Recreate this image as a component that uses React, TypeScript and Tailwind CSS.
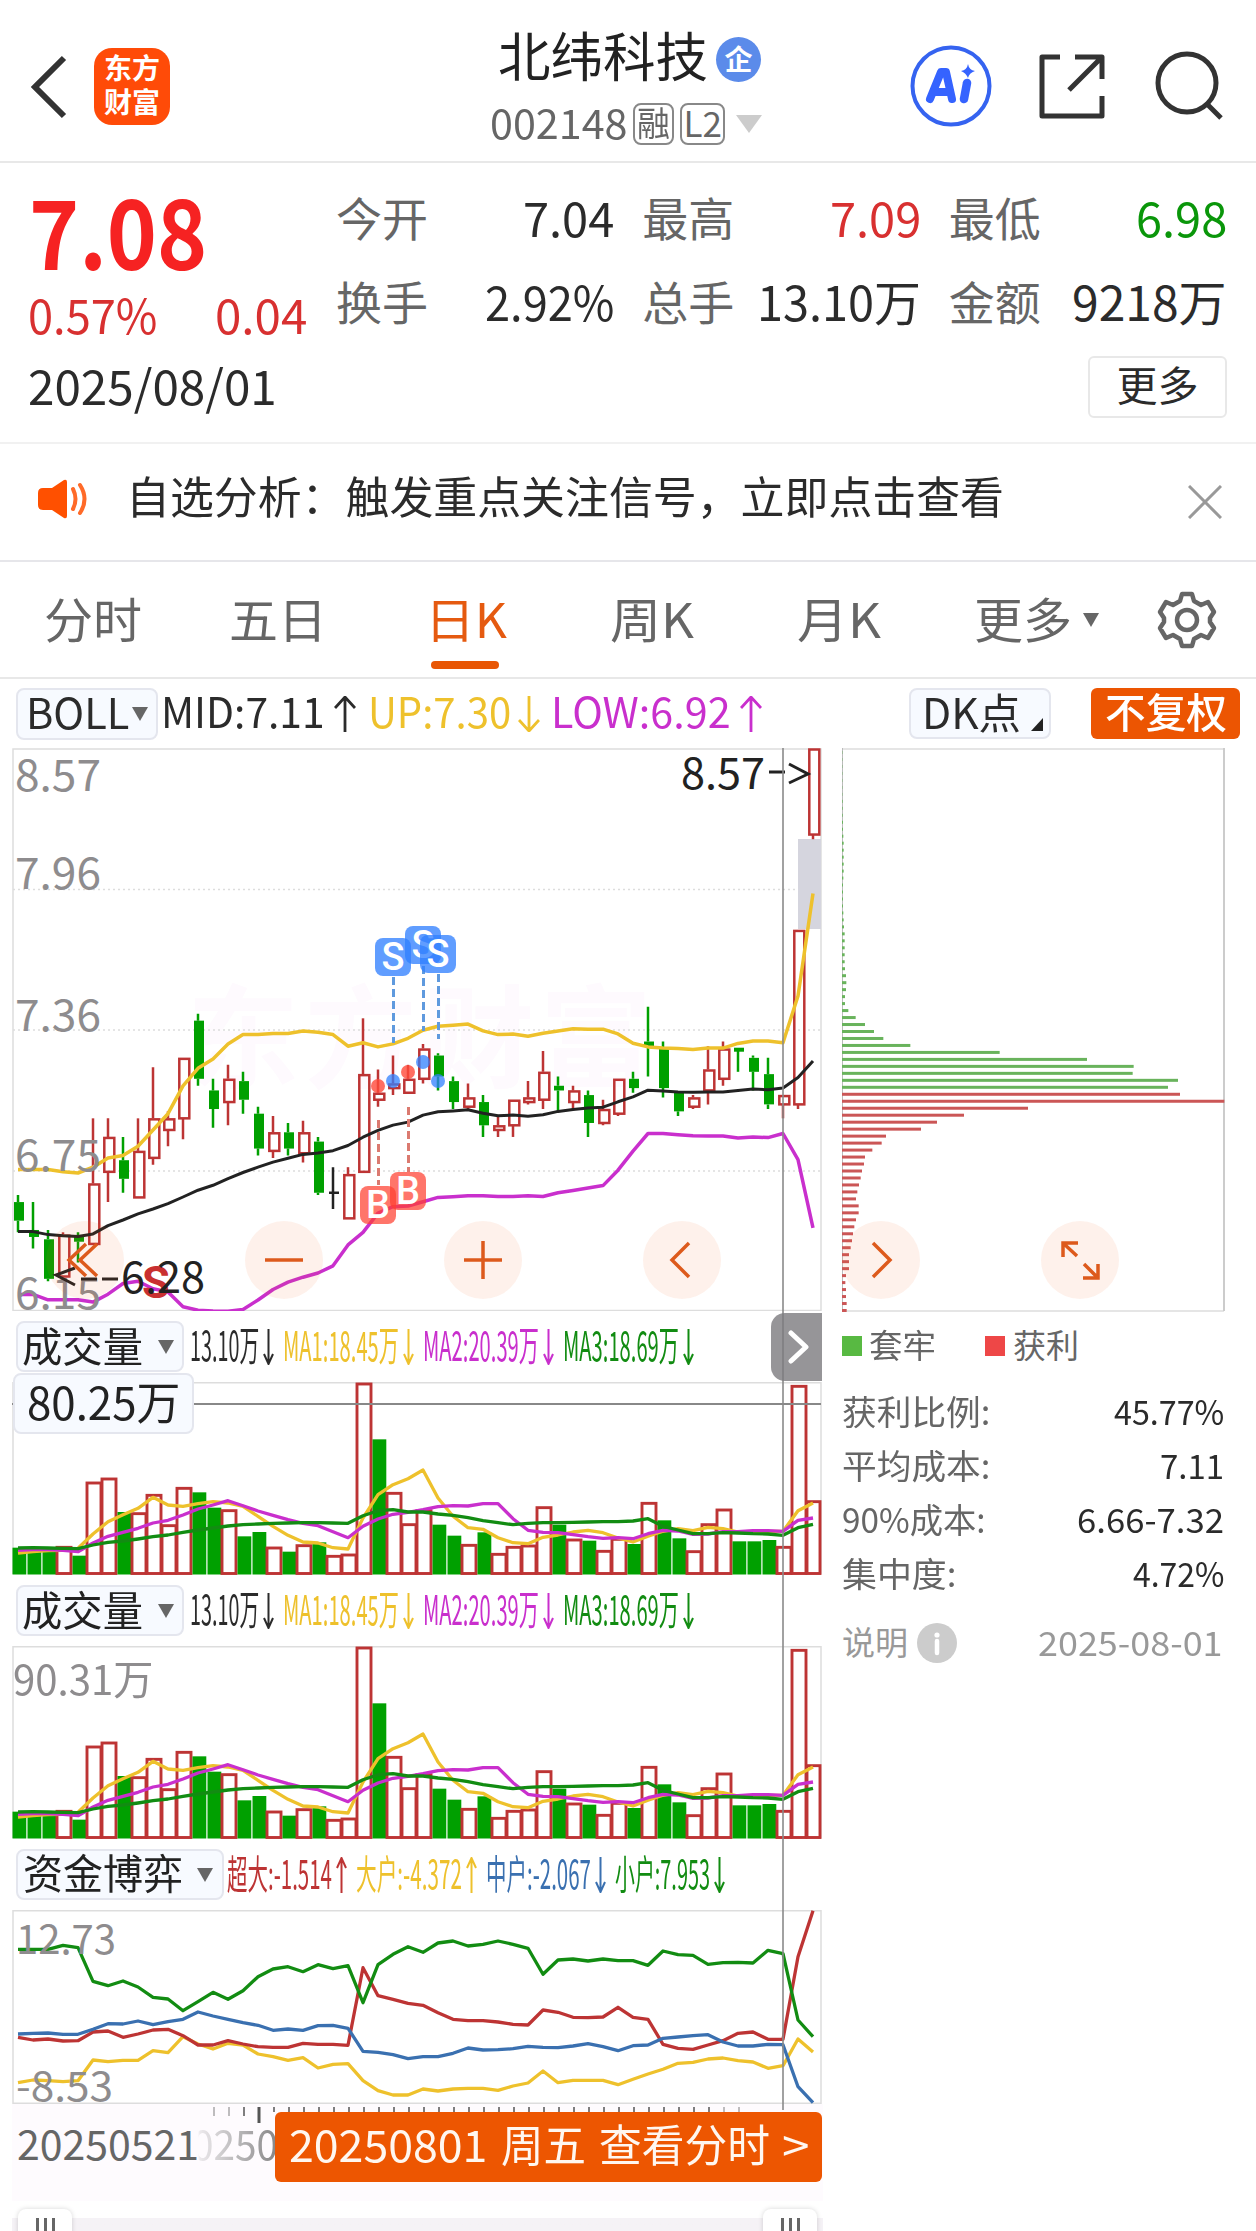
import { useLayoutEffect, useRef, useState } from 'react'
import type { ReactNode } from 'react'

const RED = '#bd3434'
const GREEN = '#00a000'
const YELLOW = '#eec12c'
const PURPLE = '#c92fcd'
const DARK_GREEN = '#128c12'
const BLUE = '#3a70b0'

// [high, body top, body bottom, low, kind], prices in cents
type Candle = [number, number, number, number, 'u' | 'd' | 'x']

const candles: Candle[] = [
  [665, 662, 654, 649, 'd'],
  [662, 650, 647, 642, 'd'],
  [650, 646, 629, 628, 'd'],
  [649, 648, 630, 630, 'u'],
  [649, 647, 645, 636, 'd'],
  [698, 670, 644, 644, 'u'],
  [698, 690, 675, 662, 'u'],
  [690, 680, 672, 666, 'd'],
  [698, 684, 664, 664, 'u'],
  [720, 698, 681, 678, 'u'],
  [701, 698, 693, 686, 'u'],
  [724, 724, 698, 689, 'u'],
  [743, 740, 715, 712, 'd'],
  [715, 710, 702, 694, 'd'],
  [721, 715, 705, 695, 'u'],
  [718, 714, 706, 700, 'd'],
  [703, 700, 685, 682, 'd'],
  [699, 692, 684, 681, 'u'],
  [696, 692, 685, 682, 'd'],
  [697, 692, 683, 679, 'u'],
  [690, 688, 666, 665, 'd'],
  [677, 666, 666, 659, 'x'],
  [677, 674, 655, 655, 'u'],
  [741, 717, 675, 675, 'u'],
  [719, 709, 706, 703, 'u'],
  [725, 713, 711, 708, 'u'],
  [721, 715, 709, 709, 'u'],
  [730, 728, 715, 713, 'u'],
  [726, 725, 716, 710, 'd'],
  [716, 714, 705, 702, 'd'],
  [713, 707, 703, 702, 'u'],
  [708, 705, 695, 690, 'd'],
  [699, 695, 693, 690, 'u'],
  [706, 706, 695, 690, 'u'],
  [714, 707, 705, 704, 'u'],
  [727, 718, 706, 702, 'u'],
  [716, 712, 710, 701, 'd'],
  [712, 710, 705, 702, 'u'],
  [710, 708, 696, 690, 'd'],
  [706, 702, 696, 695, 'u'],
  [715, 715, 700, 699, 'u'],
  [718, 715, 711, 709, 'd'],
  [746, 731, 729, 716, 'd'],
  [731, 728, 711, 707, 'd'],
  [709, 709, 701, 699, 'd'],
  [708, 707, 703, 702, 'u'],
  [729, 719, 710, 704, 'u'],
  [731, 728, 715, 712, 'u'],
  [728, 728, 727, 718, 'd'],
  [725, 724, 718, 710, 'd'],
  [724, 717, 704, 702, 'd'],
  [708, 708, 704, 698, 'u'],
  [779, 779, 704, 702, 'u'],
  [857, 857, 820, 818, 'u'],
]

const bollUp = [
  676, 676, 676, 675, 674.5, 677, 681, 682, 686, 693, 700, 712, 719.5, 723.5, 730, 734, 734, 734.5, 734.5, 735.5, 735,
  734, 729, 730.5, 728.7, 730, 732.4, 735.9, 737.6, 738, 738.5, 735.6, 734, 734.2, 733.3, 734.6, 735.5, 736.5, 736.3,
  736.3, 734.3, 730.3, 728.7, 728.2, 728, 727.6, 728.2, 728.2, 730.2, 731.2, 731.2, 730.5, 750.6, 794.7,
]
const bollMid = [
  649.3, 649.3, 648, 647.5, 647.2, 648.3, 651.9, 654.3, 656.9, 659, 661.3, 664.2, 667.1, 669.2, 672.1, 674.7, 677,
  679.2, 680.8, 682.5, 683.1, 684.1, 686.3, 689.9, 692.8, 695.1, 696.4, 699.4, 700.8, 701.2, 701.7, 700.2, 699.1,
  699.4, 698.9, 699.5, 701, 701.8, 702.4, 702.8, 705.1, 707.2, 710.1, 709.8, 709.3, 709.2, 709.3, 709.3, 710, 710.6,
  710.3, 711.1, 715.6, 722.7,
]
const bollLow = [
  622.3, 622.3, 620, 620, 620, 619, 622.4, 627, 628, 624.7, 623.4, 617, 615.5, 615.2, 615.1, 615.8, 619.9, 624.4,
  627.6, 629.7, 631.5, 634.6, 643.6, 649, 657.2, 660, 660.3, 662.1, 664, 664.3, 664.7, 664.7, 664.4, 664.4, 664.7,
  664.4, 666, 667, 668.1, 669.1, 675.7, 683.9, 691.5, 691.5, 690.9, 690.5, 690.4, 690.4, 689.6, 690, 689.7, 691.5,
  680.2, 650.9,
]

// volume series, measured down from the top of the pane in thirds of a pixel
const volumeTop = [
  714, 712, 712, 710, 738, 517, 505, 607, 609, 554, 645, 533, 548, 594, 600, 680, 667, 712, 726, 705, 698, 737, 733,
  220, 389, 548, 642, 600, 645, 678, 704, 668, 731, 710, 706, 591, 645, 688, 693, 722, 686, 703, 578, 632, 686, 723,
  642, 598, 695, 695, 691, 710, 227, 573,
]
const volumeDir = 'ddduduuduuuudduddududuuuduuudduduuuududuududduuuddduuu'
const ma1 = [
  730, 726, 723, 722, 716, 673, 636, 615, 596, 563, 586, 590, 582, 576, 580, 590, 620, 650, 677, 697, 700, 714, 718,
  625, 555, 525, 507, 481, 565, 620, 654, 659, 684, 699, 702, 683, 676, 667, 662, 669, 685, 697, 680, 665, 657, 663,
  653, 657, 667, 665, 665, 665, 603, 580,
]
const ma2 = [
  722, 720, 720, 722, 726, 700, 680, 668, 656, 640, 632, 616, 598, 586, 573, 588, 604, 617, 630, 641, 648, 666, 684,
  650, 628, 614, 608, 600, 591, 588, 589, 582, 582, 627, 662, 668, 669, 675, 681, 686, 684, 687, 672, 662, 664, 674,
  673, 666, 666, 663, 663, 665, 632, 625,
]
const ma3 = [
  715, 714, 715, 716, 717, 706, 698, 694, 688, 681, 676, 668, 661, 655, 649, 645, 643, 641, 640, 639, 639, 640, 641,
  618, 603, 600, 607, 607, 613, 617, 624, 633, 639, 645, 641, 639, 639, 638, 637, 636, 636, 634, 627, 650, 661, 672,
  672, 669, 670, 672, 673, 677, 654, 644,
]

const fundSmall = [
  328, 328, 328, 316, 323, 424, 437, 423, 441, 472, 477, 512, 485, 457, 478, 452, 410, 387, 380, 395, 374, 386, 377,
  488, 374, 343, 320, 337, 309, 303, 318, 313, 303, 313, 325, 403, 360, 357, 363, 357, 362, 362, 376, 333, 344, 346,
  373, 368, 367, 369, 331, 341, 540, 590,
]
const fundSuper = [
  592, 600, 597, 603, 602, 576, 573, 592, 582, 570, 568, 587, 615, 615, 602, 612, 620, 622, 622, 610, 613, 613, 616,
  383, 467, 478, 490, 496, 518, 538, 542, 542, 546, 553, 555, 510, 517, 532, 533, 531, 502, 532, 538, 613, 625, 628,
  615, 602, 580, 576, 598, 598, 350, 212,
]
const fundMiddle = [
  582, 580, 579, 583, 583, 568, 551, 552, 543, 554, 545, 538, 516, 528, 538, 548, 556, 571, 567, 571, 557, 556, 565,
  634, 637, 644, 656, 650, 650, 640, 624, 630, 629, 626, 619, 622, 623, 618, 611, 620, 632, 617, 615, 595, 591, 587,
  584, 606, 618, 618, 613, 614, 740, 788,
]
const fundLarge = [
  728, 720, 722, 725, 722, 660, 665, 661, 661, 632, 638, 590, 612, 627, 610, 615, 642, 650, 661, 653, 684, 673, 671,
  722, 752, 765, 765, 747, 753, 747, 745, 745, 751, 738, 729, 693, 728, 721, 721, 721, 734, 718, 702, 688, 670, 667,
  657, 654, 662, 666, 685, 677, 597, 636,
]

const chips = [
  1, 1, 1, 1, 1, 1, 1, 2, 2, 2, 3, 3, 4, 5, 5, 5, 5, 5, 4, 3, 3, 3, 3, 4, 5, 6, 8, 8, 8, 8, 8, 9, 12, 13, 12, 9, 9, 19,
  41, 69, 96, 124, 205, 473, 735, 875, 872, 1008, 978, 1014, 1147, 558, 366, 285, 237, 132, 119, 91, 69, 66, 60, 56,
  51, 46, 42, 50, 50, 42, 37, 33, 30, 26, 21, 21, 21, 12, 10, 12, 12, 14, 14,
]

const cx = (i: number) => 6 + i * 15
const priceY = (p: number) => (857 - p) * 2.326 + 0.5
const volY = (v: number) => (v - 217) / 3
const fundY = (v: number) => (v - 210) / 3
const line = (data: number[], y: (v: number) => number) =>
  data.map((v, i) => `${cx(i)},${y(v).toFixed(1)}`).join(' ')

// Squeezes or stretches one line of text to a given width
function Fit({ w, className = '', children }: { w: number; className?: string; children: ReactNode }) {
  const ref = useRef<HTMLSpanElement>(null)
  const [scale, setScale] = useState(1)
  useLayoutEffect(() => {
    if (ref.current) setScale(w / ref.current.offsetWidth)
  }, [w])
  return (
    <span className={`flex shrink-0 ${className}`} style={{ width: w }}>
      <span
        ref={ref}
        className="shrink-0 origin-left leading-none whitespace-nowrap"
        style={{ transform: `scaleX(${scale})` }}
      >
        {children}
      </span>
    </span>
  )
}

function Arrow({ down, narrow }: { down?: boolean; narrow?: boolean }) {
  const w = narrow ? 11 : 22
  const d = down
    ? `M${w / 2} 0V34M1 ${narrow ? 25 : 24}L${w / 2} 35L${w - 1} ${narrow ? 25 : 24}`
    : `M${w / 2} 36V2M1 ${narrow ? 11 : 12}L${w / 2} 1L${w - 1} ${narrow ? 11 : 12}`
  return (
    <svg width={w} height="36" viewBox={`0 0 ${w} 36`} className="shrink-0" fill="none" stroke="currentColor">
      <path d={d} strokeWidth={narrow ? 2 : 2.8} />
    </svg>
  )
}

function Caret({ className = '' }: { className?: string }) {
  return (
    <svg width="16" height="14" viewBox="0 0 16 14" className={`shrink-0 ${className}`} fill="#666">
      <path d="M0 0H16L8 14Z" />
    </svg>
  )
}

function Label({ x, y, w, size = 44, fill = '#8e8c8e', children }: {
  x: number
  y: number
  w: number
  size?: number
  fill?: string
  children: string
}) {
  return (
    <text x={x} y={y} fontSize={size} fill={fill} textLength={w} lengthAdjust="spacingAndGlyphs">
      {children}
    </text>
  )
}

function Header() {
  return (
    <header className="flex h-[163px] border-b-2 border-[#e8e8e8]">
      <div className="flex w-[490px] items-center">
        <svg width="40" height="66" viewBox="0 0 40 66" className="mt-[12px] ml-[27px]" fill="none">
          <path d="M37 4L8 33L37 62" stroke="#333" strokeWidth="6" />
        </svg>
        <div className="mt-[12px] ml-[27px] flex h-[77px] w-[76px] flex-col items-center justify-center gap-[6px] rounded-[18px] bg-[#ff4b08] pb-[5px] text-[28px] font-bold text-white">
          <Fit w={56}>东方</Fit>
          <Fit w={56}>财富</Fit>
        </div>
      </div>
      <div className="w-[290px]">
        <div className="mt-[28px] flex items-center">
          <Fit w={210} className="ml-[8px] pb-[9px] text-[53px] text-[#222]">
            北纬科技
          </Fit>
          <span className="ml-[8px] flex size-[45px] items-center justify-center rounded-full bg-[#5b8bea] pb-[3px] text-[28px] leading-none font-bold text-white">
            企
          </span>
        </div>
        <div className="mt-[12px] flex h-[44px] items-center text-[#666]">
          <Fit w={138} className="pb-[6px] text-[41px]">
            002148
          </Fit>
          <span className="ml-[5px] flex h-[42px] w-[41px] items-center justify-center rounded-[8px] border-2 border-[#888] pb-[4px] text-[34px]">
            <Fit w={33}>融</Fit>
          </span>
          <span className="ml-[6px] flex h-[42px] w-[45px] items-center justify-center rounded-[8px] border-2 border-[#888] pb-[5px] text-[35px]">
            <Fit w={38}>L2</Fit>
          </span>
          <svg width="26" height="18" viewBox="0 0 26 18" className="ml-[11px]" fill="#ccc">
            <path d="M0 0H26L13 18Z" />
          </svg>
        </div>
      </div>
      <div className="flex flex-1 pt-[45px] pl-[130px]">
        <svg width="82" height="82" viewBox="0 0 82 82" fill="none">
          <circle cx="41" cy="41" r="38.5" stroke="#3563f0" strokeWidth="4" />
          <path d="M20 54L31 27H36L42 54M25 47H40" stroke="#3563ff" strokeWidth="8" strokeLinejoin="round" strokeLinecap="round" />
          <path d="M57 38L54 54" stroke="#3563ff" strokeWidth="8.5" strokeLinecap="round" />
          <path d="M58 19Q59 25 65 26Q59 28 58 33Q56 28 51 26Q57 25 58 19Z" fill="#3563ff" />
        </svg>
        <svg width="70" height="70" viewBox="0 0 70 70" className="mt-[7px] ml-[45px]" fill="none" stroke="#333" strokeWidth="5" strokeLinejoin="round">
          <path d="M23 5H5V64H65V44" />
          <path d="M38 5H65V27M65 5L32 38" />
        </svg>
        <svg width="72" height="72" viewBox="0 0 72 72" className="mt-[5px] ml-[46px]" fill="none" stroke="#333" strokeWidth="5">
          <circle cx="34" cy="33" r="29" />
          <path d="M54 54L68 68" />
        </svg>
      </div>
    </header>
  )
}

const quotes = [
  { label: '今开', value: '7.04', w: 91, color: 'text-[#2b2b2b]' },
  { label: '最高', value: '7.09', w: 91, color: 'text-[#d83030]' },
  { label: '最低', value: '6.98', w: 91, color: 'text-[#0a960a]' },
  { label: '换手', value: '2.92%', w: 129, color: 'text-[#2b2b2b]' },
  { label: '总手', value: '13.10万', w: 164, color: 'text-[#2b2b2b]' },
  { label: '金额', value: '9218万', w: 155, color: 'text-[#2b2b2b]' },
]

function Quote() {
  return (
    <section className="h-[281px] border-b-2 border-[#f1f1f1] pr-[29px] pl-[28px]">
      <div className="flex">
        <div className="w-[308px] pt-[18px]">
          <Fit w={178} className="ml-[1px] text-[96px] font-bold text-[#f62222]">
            7.08
          </Fit>
          <div className="mt-[12px] flex justify-between pr-[29px] text-[48px] text-[#d83030]">
            <Fit w={129}>0.57%</Fit>
            <Fit w={92}>0.04</Fit>
          </div>
        </div>
        <div className="grid flex-1 grid-cols-3 content-start gap-x-[28px] gap-y-[36px] pt-[29px]">
          {quotes.map((q) => (
            <div key={q.label} className="flex h-[48px] items-center justify-between">
              <Fit w={92} className="text-[46px] text-[#666]">
                {q.label}
              </Fit>
              <Fit w={q.w} className={`text-[48px] ${q.color}`}>
                {q.value}
              </Fit>
            </div>
          ))}
        </div>
      </div>
      <div className="mt-[19px] flex items-center justify-between">
        <Fit w={249} className="pb-[7px] text-[48px] text-[#2b2b2b]">
          2025/08/01
        </Fit>
        <button className="flex h-[62px] w-[139px] items-center justify-center rounded-[6px] border-2 border-[#e8e8e8] pb-[8px]">
          <Fit w={82} className="text-[41px] text-[#2b2b2b]">
            更多
          </Fit>
        </button>
      </div>
    </section>
  )
}

function Notice() {
  return (
    <section className="flex h-[118px] items-center border-b-2 border-[#e6e6ea] pl-[38px]">
      <svg width="50" height="40" viewBox="0 0 50 40" className="mb-[7px]" fill="none">
        <path d="M5 9H14L26 1Q29 0 29 3V37Q29 40 26 39L14 31H5Q0 31 0 26V14Q0 9 5 9Z" fill="#ff5000" />
        <path d="M35 10Q40 20 35 30M42 6Q51 20 42 34" stroke="#ff6a28" strokeWidth="4" strokeLinecap="round" />
      </svg>
      <Fit w={878} className="ml-[38px] pb-[14px] text-[44px] text-[#2b2b2b]">
        自选分析：触发重点关注信号，立即点击查看
      </Fit>
      <svg width="34" height="34" viewBox="0 0 34 34" className="ml-[184px]" stroke="#999" strokeWidth="3">
        <path d="M1 1L33 33M33 1L1 33" />
      </svg>
    </section>
  )
}

const tabs = [
  { name: '分时', w: 98, gap: 'ml-[44px]' },
  { name: '五日', w: 98, gap: 'ml-[87px]' },
  { name: '日K', w: 82, gap: 'ml-[98px]' },
  { name: '周K', w: 84, gap: 'ml-[103px]' },
  { name: '月K', w: 84, gap: 'ml-[103px]' },
  { name: '更多', w: 98, gap: 'ml-[93px]' },
]

function Tabs() {
  return (
    <nav className="flex h-[117px] items-center border-b-2 border-[#e8e8e8] text-[48px] text-[#666]">
      {tabs.map((t) => (
        <div key={t.name} className={`relative ${t.gap} ${t.name === '日K' ? 'text-[#e55a10]' : ''}`}>
          <Fit w={t.w} className="pb-[5px]">{t.name}</Fit>
          {t.name === '日K' && (
            <span className="absolute top-[68px] left-[6px] h-[8px] w-[68px] rounded-full bg-[#e85604]" />
          )}
        </div>
      ))}
      <Caret className="ml-[11px]" />
      <svg width="60" height="60" viewBox="0 0 60 60" className="ml-[58px]" fill="none" stroke="#666" strokeWidth="4.5" strokeLinejoin="round">
        <path d="M25 4H35L37 11L44 15L51 12L57 22L53 28V32L57 38L51 48L44 45L37 49L35 56H25L23 49L16 45L9 48L3 38L7 32V28L3 22L9 12L16 15L23 11Z" />
        <circle cx="30" cy="30" r="10" />
      </svg>
    </nav>
  )
}

function IndicatorRow() {
  return (
    <div className="flex h-[69px] items-center pl-[16px] text-[42px]">
      <div className="flex h-[52px] w-[142px] items-center rounded-[8px] border-2 border-[#e4e6ee] bg-[#f7faff] pl-[8px] text-[#2b2b2b]">
        <Fit w={103} className="pb-[6px]">BOLL</Fit>
        <Caret className="ml-[3px]" />
      </div>
      <div className="ml-[3px] flex items-center text-[#2b2b2b]">
        <Fit w={164} className="pb-[7px]">MID:7.11</Fit>
        <span className="ml-[9px]"><Arrow /></span>
      </div>
      <div className="ml-[12px] flex items-center text-[#eec12c]">
        <Fit w={143} className="pb-[7px]">UP:7.30</Fit>
        <span className="ml-[7px]"><Arrow down /></span>
      </div>
      <div className="ml-[11px] flex items-center text-[#c92fcd]">
        <Fit w={180} className="pb-[7px]">LOW:6.92</Fit>
        <span className="ml-[9px]"><Arrow /></span>
      </div>
      <div className="ml-[147px] flex h-[51px] w-[142px] items-center rounded-[8px] border-2 border-[#e4e6ee] bg-[#f7faff] pl-[11px] text-[#2b2b2b]">
        <Fit w={99} className="pb-[6px]">DK点</Fit>
        <svg width="12" height="13" viewBox="0 0 12 13" className="mt-[22px] ml-[10px]" fill="#222">
          <path d="M12 0V13H0Z" />
        </svg>
      </div>
      <div className="ml-[40px] flex h-[51px] w-[149px] items-center justify-center rounded-[6px] bg-[#ec5502] text-[41px] font-medium text-white">
        <Fit w={122} className="pb-[7px]">不复权</Fit>
      </div>
    </div>
  )
}

const sellPins = [
  { x: 363, y: 190, from: 229, to: 295 },
  { x: 393, y: 178, from: 218, to: 283 },
  { x: 408, y: 187, from: 226, to: 291 },
]
const buyPins = [
  { x: 348, y: 438, from: 372, to: 437 },
  { x: 378, y: 424, from: 359, to: 424 },
]

function CandleChart() {
  return (
    <svg width="811" height="563" viewBox="0 0 811 563" className="block" fill="none">
      <text x="175" y="332" fontSize="112" fontWeight="700" fill="#fefafe" textLength="465">
        东方财富
      </text>
      <path d="M1 141.5H809M1 282H809M1 423H809" stroke="#ddd" strokeWidth="1.5" strokeDasharray="2 3" />
      <rect x="1" y="1" width="808" height="561.5" stroke="#ddd" strokeWidth="1.5" />
      <rect x="786" y="91" width="23" height="90" fill="#d5d5de" />
      {candles.map(([high, top, bottom, low, kind], i) => {
        const x = cx(i)
        const y1 = priceY(top)
        const y2 = priceY(bottom)
        const color = kind === 'u' ? RED : kind === 'd' ? GREEN : '#222'
        return (
          <g key={i} stroke={color} strokeWidth="2.5">
            <path d={`M${x} ${priceY(high)}V${y1}M${x} ${y2}V${priceY(low)}`} />
            {kind === 'u' && <rect x={x - 3.7} y={y1 + 1} width="10" height={Math.max(y2 - y1 - 1, 2)} />}
            {kind === 'd' && <rect x={x - 4} y={y1} width="10" height={Math.max(y2 - y1, 1)} fill={GREEN} stroke="none" />}
            {kind === 'd' && y2 - y1 < 6 && <path d={`M${x - 4} ${(y1 + y2) / 2}h10`} strokeWidth="4" />}
            {kind === 'x' && <path d={`M${x - 4} ${y1}h10`} />}
          </g>
        )
      })}
      <polyline points={line(bollUp, priceY)} stroke={YELLOW} strokeWidth="3.5" strokeLinejoin="round" />
      <polyline points={line(bollMid, priceY)} stroke="#222" strokeWidth="3" strokeLinejoin="round" />
      <polyline points={line(bollLow, priceY)} stroke={PURPLE} strokeWidth="3.5" strokeLinejoin="round" />

      <g fill="#ff4a3a" fillOpacity="0.8">
        <circle cx="366" cy="338" r="7" />
        <circle cx="396" cy="324" r="7" />
      </g>
      <g fill="#3080ff" fillOpacity="0.75">
        <circle cx="381" cy="333" r="7" />
        <circle cx="411" cy="314" r="7" />
        <circle cx="426" cy="333" r="7" />
      </g>
      {sellPins.map((p) => (
        <g key={p.x}>
          <path d={`M${p.x + 18.5} ${p.from}V${p.to}`} stroke="#5f9ade" strokeWidth="3" strokeDasharray="8 4" />
          <rect x={p.x} y={p.y} width="36" height="38" rx="8" fill="#3080ff" fillOpacity="0.77" />
          <text x={p.x + 18} y={p.y + 32} fontSize="38" fontWeight="500" fill="#fff" textAnchor="middle" fontFamily="Roboto, sans-serif">
            S
          </text>
        </g>
      ))}
      {buyPins.map((p) => (
        <g key={p.x}>
          <path d={`M${p.x + 18.5} ${p.from}V${p.to}`} stroke="#db7a70" strokeWidth="3" strokeDasharray="8 4" />
          <rect x={p.x} y={p.y} width="36" height="38" rx="8" fill="#ff4030" fillOpacity="0.72" />
          <text x={p.x + 18} y={p.y + 32} fontSize="38" fontWeight="500" fill="#fff" textAnchor="middle" fontFamily="Roboto, sans-serif">
            B
          </text>
        </g>
      ))}

      <Label x={3} y={43} w={86}>8.57</Label>
      <Label x={3} y={141} w={86}>7.96</Label>
      <Label x={3} y={283} w={86}>7.36</Label>
      <Label x={3} y={423} w={86}>6.75</Label>
      <Label x={3} y={561} w={86}>6.15</Label>
      <text x="130" y="550" fontSize="45" fontWeight="700" fill="#c93030" fontFamily="Roboto, sans-serif">
        S
      </text>
      <Label x={109} y={545} w={84} fill="#222">6.28</Label>
      <path d="M63 520L44 527L63 537M69 531H85M90 531H106" stroke="#222" strokeWidth="3" />
      <Label x={669} y={41} w={84} fill="#222">8.57</Label>
      <path d="M757 24H773M777 16L796 26L777 35" stroke="#222" strokeWidth="3" />
    </svg>
  )
}

function VolumeChart() {
  return (
    <svg width="811" height="193" viewBox="0 0 811 193" className="block" fill="none">
      <path d="M1 192V0.75H809V192" stroke="#ddd" strokeWidth="1.5" />
      {volumeTop.map((v, i) => {
        const x = i * 15
        const y = volY(v)
        return volumeDir[i] === 'u' ? (
          <rect key={i} x={x} y={y + 1} width={i === 53 ? 13 : 14} height={190.5 - y} stroke={RED} strokeWidth="2.9" />
        ) : (
          <rect key={i} x={x + 0.5} y={y} width="13.8" height={192.5 - y} fill={GREEN} />
        )
      })}
      <g strokeWidth="3.3" strokeLinejoin="round">
        <polyline points={line(ma1, volY)} stroke={YELLOW} />
        <polyline points={line(ma2, volY)} stroke={PURPLE} />
        <polyline points={line(ma3, volY)} stroke={DARK_GREEN} />
      </g>
    </svg>
  )
}

const volumeStats = [
  { text: '13.10万', w: 69, color: 'text-[#2b2b2b]' },
  { text: 'MA1:18.45万', w: 116, color: 'text-[#eec12c]' },
  { text: 'MA2:20.39万', w: 116, color: 'text-[#c92fcd]' },
  { text: 'MA3:18.69万', w: 116, color: 'text-[#128c12]' },
]

function VolumeHeader() {
  return (
    <div className="flex h-[71px] items-center pl-[4px]">
      <div className="flex h-[51px] w-[168px] items-center rounded-[8px] border-2 border-[#e4e6ee] bg-[#f7faff] pl-[4px]">
        <Fit w={121} className="pb-[5px] text-[41px] text-[#222]">成交量</Fit>
        <Caret className="ml-[15px]" />
      </div>
      <div className="ml-[6px] flex gap-[9px]">
        {volumeStats.map((s) => (
          <div key={s.text} className={`flex items-center gap-[4px] text-[41px] ${s.color}`}>
            <Fit w={s.w} className="pb-[6px]">{s.text}</Fit>
            <Arrow down narrow />
          </div>
        ))}
      </div>
    </div>
  )
}

const fundStats = [
  { text: '超大:-1.514', w: 105, color: 'text-[#bd3434]', down: false },
  { text: '大户:-4.372', w: 106, color: 'text-[#eec12c]', down: false },
  { text: '中户:-2.067', w: 105, color: 'text-[#3a70b0]', down: true },
  { text: '小户:7.953', w: 95, color: 'text-[#128c12]', down: true },
]

function FundPanel() {
  return (
    <>
      <div className="flex h-[71px] items-center pl-[4px]">
        <div className="flex h-[51px] w-[208px] items-center rounded-[8px] border-2 border-[#e4e6ee] bg-[#f7faff] pl-[5px]">
          <Fit w={160} className="pb-[6px] text-[41px] text-[#222]">资金博弈</Fit>
          <Caret className="ml-[14px]" />
        </div>
        <div className="ml-[3px] flex gap-[9px]">
          {fundStats.map((s) => (
            <div key={s.text} className={`flex items-center gap-[4px] text-[40px] ${s.color}`}>
              <Fit w={s.w} className="pb-[6px]">{s.text}</Fit>
              <Arrow down={s.down} narrow />
            </div>
          ))}
        </div>
      </div>
      <svg width="811" height="194" viewBox="0 0 811 194" className="block" fill="none">
        <rect x="1" y="0.75" width="808" height="192.5" stroke="#ddd" strokeWidth="1.5" />
        <g strokeWidth="3.3" strokeLinejoin="round">
          <polyline points={line(fundLarge, fundY)} stroke={YELLOW} />
          <polyline points={line(fundSuper, fundY)} stroke={RED} />
          <polyline points={line(fundSmall, fundY)} stroke={DARK_GREEN} />
          <polyline points={line(fundMiddle, fundY)} stroke={BLUE} />
        </g>
        <Label x={4} y={44} w={100} size={41}>12.73</Label>
        <Label x={4} y={191} w={97} size={41}>-8.53</Label>
      </svg>
    </>
  )
}

function DateBar() {
  return (
    <div className="relative h-[97px] bg-[#fefbfe]">
      <svg width="811" height="20" viewBox="0 0 811 20" className="block" stroke="#555">
        {Array.from({ length: 36 }, (_, i) => (
          <path key={i} d={`M${202 + i * 15} 3V${i === 3 ? 19 : i < 3 ? 12 : 8}`} strokeWidth={i === 3 ? 3 : 1.5} opacity={i < 2 || i > 33 ? 0.5 : 1} />
        ))}
      </svg>
      <div className="mt-[-2px] flex text-[41px] text-[#666]">
        <Fit w={182} className="ml-[5px]">20250521</Fit>
        <Fit w={86} className="ml-[-7px] [mask-image:linear-gradient(to_right,transparent_6px,rgba(0,0,0,0.12)_8px,#000c)]">0250</Fit>
      </div>
      <button className="absolute top-[8px] left-[263px] flex h-[70px] w-[547px] items-center rounded-[6px] bg-[#ed5601] pl-[14px] text-[44px] text-[#fff7f0]">
        <Fit w={198} className="pb-[8px]">20250801</Fit>
        <Fit w={85} className="ml-[14px] pb-[8px]">周五</Fit>
        <Fit w={171} className="ml-[13px] pb-[8px]">查看分时</Fit>
        <Fit w={27} className="ml-[12px] pb-[8px]">&gt;</Fit>
      </button>
    </div>
  )
}

function Grip() {
  return (
    <div className="flex h-[60px] w-[54px] justify-center gap-[5px] rounded-[8px] bg-white pt-[9px] shadow-[0_0_5px_rgba(0,0,0,0.16)]">
      <span className="h-[40px] w-[3px] bg-[#666]" />
      <span className="h-[40px] w-[3px] bg-[#666]" />
      <span className="h-[40px] w-[3px] bg-[#666]" />
    </div>
  )
}

const controls = [
  'M40 23L23 39L40 55M51 23L34 39L51 55',
  'M20 39H58',
  'M20 39H58M39 20V58',
  'M46 22L29 39L46 56',
  'M31 22L48 39L31 56',
  'M22 36V22H37M22 22L36 35M57 43V57H42M57 57L43 43',
]

function ChipPanel() {
  return (
    <div className="ml-[19px] w-[382px]">
      <svg width="383" height="564" viewBox="0 0 383 564" className="block">
        <path d="M0 1H382M0 563H382" stroke="#ddd" strokeWidth="1.5" />
        <path d="M0.5 0V563" stroke="#bbb" strokeWidth="1" />
        <path d="M382 0V563" stroke="#ccc" strokeWidth="2" />
        {chips.map((c, k) => (
          <rect key={k} x="0" y={3 + k * 6.975} width={c / 3} height="3" fill={k < 49 ? '#69b35c' : '#cb5656'} />
        ))}
      </svg>
      <div className="mt-[14px] flex h-[40px] items-center text-[33px] text-[#666]">
        <span className="size-[20px] bg-[#58b942]" />
        <Fit w={67} className="ml-[7px] pb-[4px]">套牢</Fit>
        <span className="ml-[49px] size-[20px] bg-[#ee4747]" />
        <Fit w={66} className="ml-[8px] pb-[4px]">获利</Fit>
      </div>
      <div className="mt-[18px] text-[34px] text-[#666]">
        <div className="flex h-[54px] items-center justify-between">
          <Fit w={148}>获利比例:</Fit>
          <Fit w={110} className="text-[#2b2b2b]">45.77%</Fit>
        </div>
        <div className="flex h-[54px] items-center justify-between">
          <Fit w={148}>平均成本:</Fit>
          <Fit w={64} className="text-[#2b2b2b]">7.11</Fit>
        </div>
        <div className="flex h-[54px] items-center justify-between">
          <Fit w={144}>90%成本:</Fit>
          <Fit w={147} className="text-[#2b2b2b]">6.66-7.32</Fit>
        </div>
        <div className="flex h-[54px] items-center justify-between">
          <Fit w={114}>集中度:</Fit>
          <Fit w={91} className="text-[#2b2b2b]">4.72%</Fit>
        </div>
      </div>
      <div className="mt-[16px] flex h-[54px] items-center text-[33px] text-[#999]">
        <Fit w={66} className="pb-[3px]">说明</Fit>
        <svg width="40" height="40" viewBox="0 0 40 40" className="ml-[9px]">
          <circle cx="20" cy="20" r="20" fill="#ccc" />
          <circle cx="20" cy="12" r="2.6" fill="#fff" />
          <path d="M20 18V30" stroke="#fff" strokeWidth="4.5" strokeLinecap="round" />
        </svg>
        <Fit w={185} className="ml-[81px] pb-[3px] text-[34px]">2025-08-01</Fit>
      </div>
    </div>
  )
}

export default function App() {
  return (
    <div className="h-[2231px] w-[1256px] overflow-hidden bg-white font-['Noto_Sans_CJK_SC',sans-serif]">
      <Header />
      <Quote />
      <Notice />
      <Tabs />
      <IndicatorRow />
      <main className="relative flex pl-[12px]">
        <div className="w-[811px]">
          <CandleChart />
          <VolumeHeader />
          <div className="relative">
            <VolumeChart />
            <span className="absolute top-[21px] left-0 h-[1.5px] w-[809px] bg-[#888]" />
            <div className="absolute top-[-9px] left-[1px] flex h-[61px] w-[181px] items-center rounded-[8px] border-2 border-[#e4e6ee] bg-[#f7faff] pl-[12px]">
              <Fit w={153} className="pb-[6px] text-[45px] text-[#222]">80.25万</Fit>
            </div>
          </div>
          <VolumeHeader />
          <div className="relative">
            <VolumeChart />
            <Fit w={140} className="absolute top-[11px] left-[1px] text-[41px] text-[#8e8c8e]">90.31万</Fit>
          </div>
          <FundPanel />
          <DateBar />
          <div className="mt-[8px] flex justify-between bg-linear-to-b from-white from-[9px] to-[#f5f2f6] to-[9px] px-[6px]">
            <Grip />
            <Grip />
          </div>
        </div>
        <ChipPanel />

        {/* crosshair */}
        <span className="absolute top-0 left-[782px] h-[1362px] w-[2px] bg-[#8a8a8a]/80" />
        {/* chart controls */}
        <div className="absolute top-[473px] left-[46px] flex gap-[121px]">
          {controls.map((d) => (
            <svg key={d} width="78" height="78" viewBox="0 0 78 78" fill="none">
              <circle cx="39" cy="39" r="39" fill="#f26322" fillOpacity="0.09" />
              <path d={d} stroke="#dd5a1c" strokeWidth="3.5" />
            </svg>
          ))}
        </div>
        <div className="absolute top-[565px] left-[771px] flex h-[68px] w-[51px] items-center justify-center rounded-l-[14px] bg-[#7c7a7e]/80 pl-[4px]">
          <svg width="22" height="34" viewBox="0 0 22 34" fill="none" stroke="#fff" strokeWidth="5" strokeLinecap="round" strokeLinejoin="round">
            <path d="M3 3L18 17L3 31" />
          </svg>
        </div>
      </main>
    </div>
  )
}
